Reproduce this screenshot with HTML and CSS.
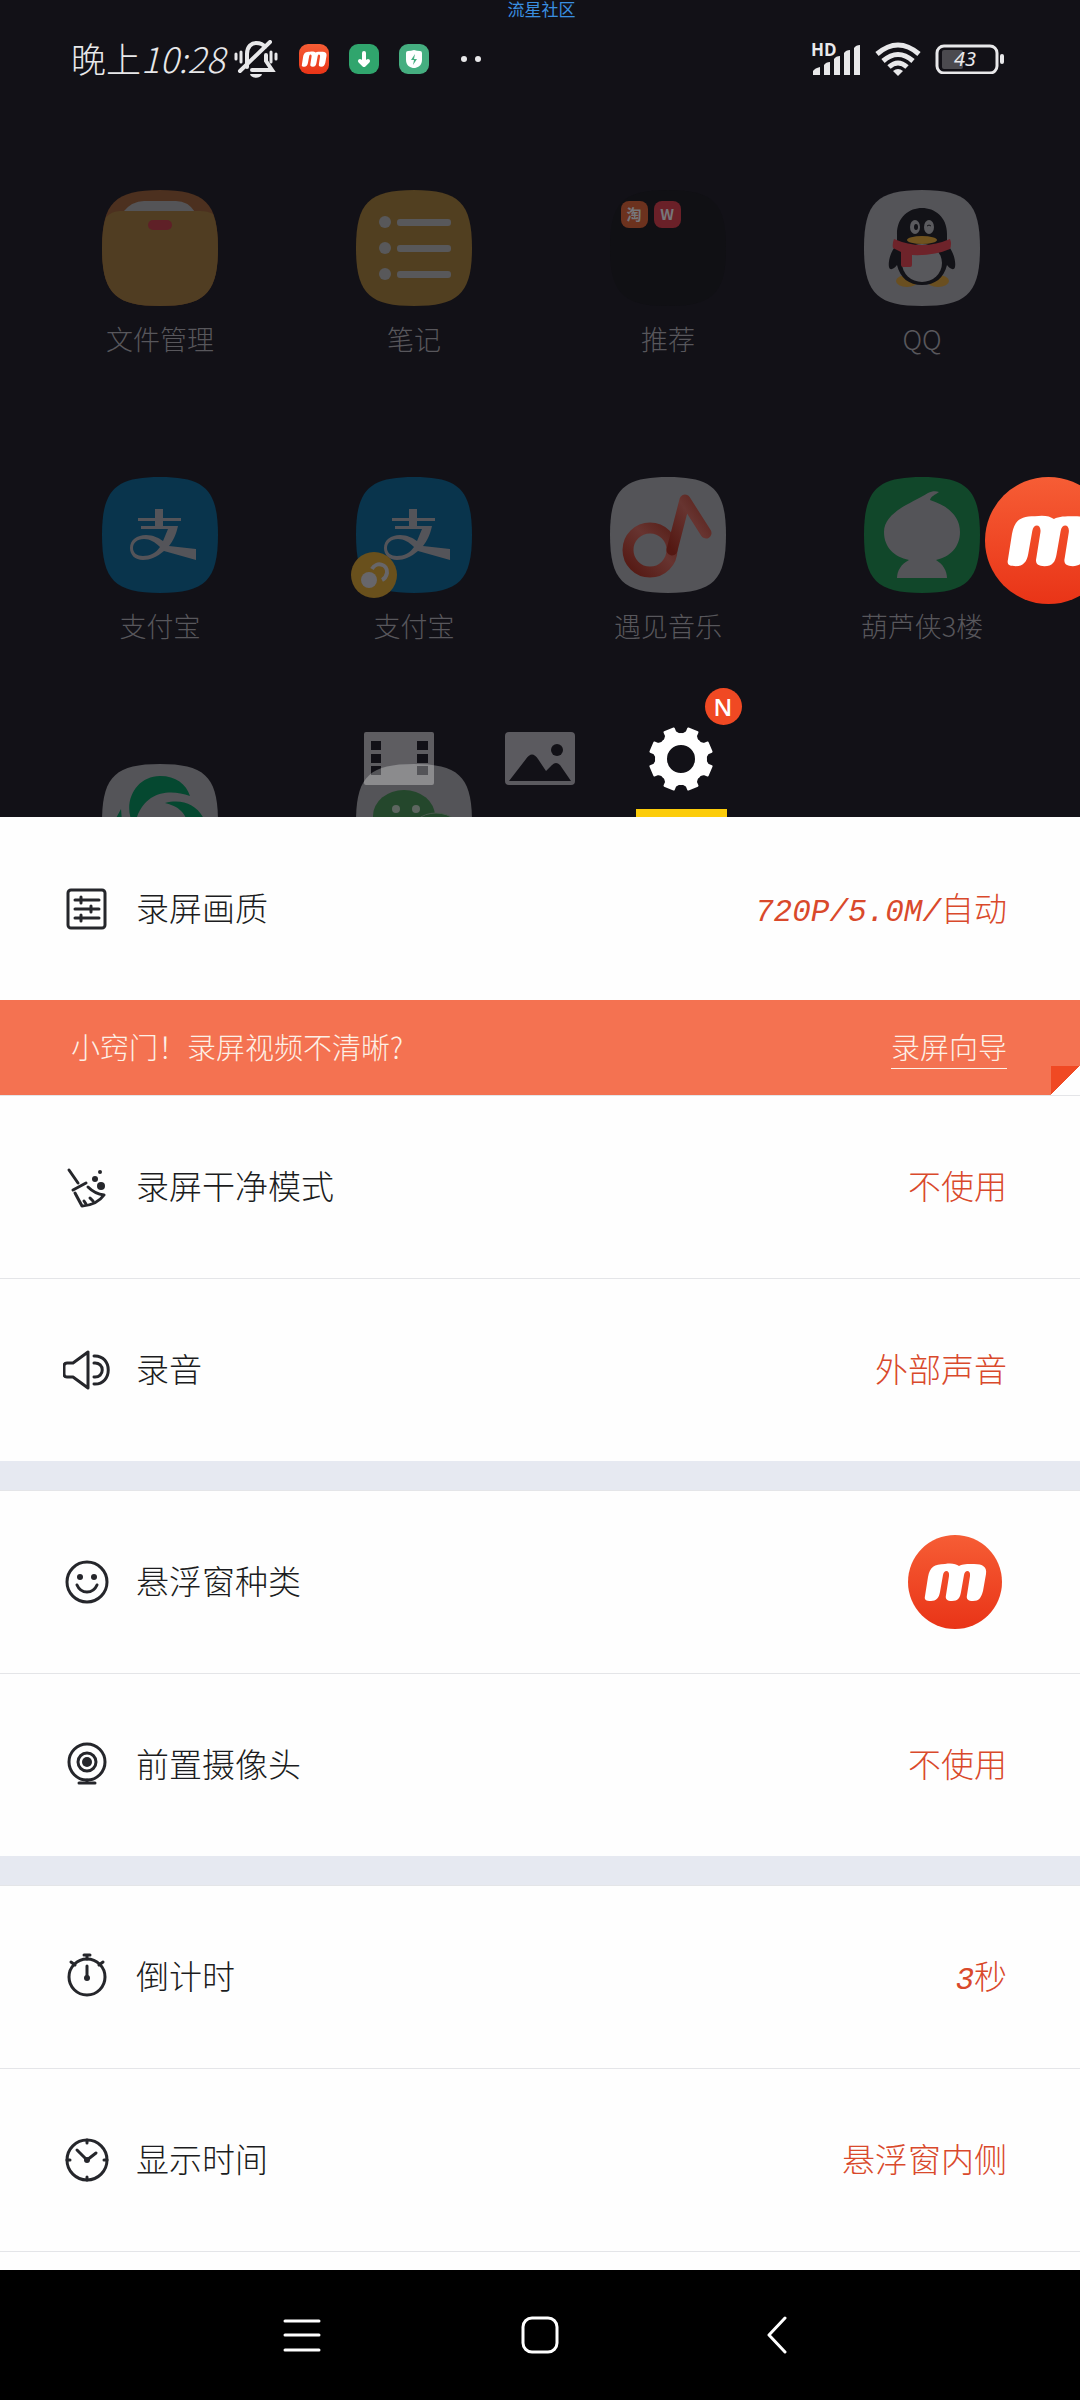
FILE: index.html
```html
<!DOCTYPE html>
<html lang="zh-CN">
<head>
    <meta charset="UTF-8">
    <meta name="viewport" content="width=device-width, initial-scale=1.0">
    <title>录屏设置</title>
    <link rel="stylesheet" href="styles.css">
</head>
<body>

    <!-- shared shapes -->
    <svg class="defs" width="0" height="0" aria-hidden="true">
        <defs>
            <linearGradient id="red" x1="0" y1="0" x2="0" y2="1">
                <stop offset="0" stop-color="#f65d35"/>
                <stop offset="1" stop-color="#e93417"/>
            </linearGradient>
            <linearGradient id="note" x1="0" y1="1" x2="1" y2="0">
                <stop offset="0" stop-color="#541812"/>
                <stop offset="0.6" stop-color="#673430"/>
                <stop offset="1" stop-color="#58201a"/>
            </linearGradient>
            <symbol id="squircle" viewBox="0 0 116 116">
                <path d="M58 0C103 0 116 13 116 58S103 116 58 116 0 103 0 58 13 0 58 0Z"/>
            </symbol>
            <symbol id="logo" viewBox="0 0 94 94">
                <path fill="#fff" d="M17 61L20 42C22 32 26 29 37 29C44 28 48 29 51 31C55 29 59 29 66 29C75 29 79 32 78 39L75 56C73 63 71 66 65 66C60 66 58 64 59 60L62 41C63 35 57 34 56 40L53 57C52 63 50 66 44 66C39 66 37 64 38 60L41 41C42 35 36 34 35 40L32 57C31 63 28 66 23 66C18 66 16 65 17 61Z"/>
            </symbol>
            <symbol id="alipay" viewBox="0 0 116 116">
                <path fill="#09344c" d="M58 0C103 0 116 13 116 58S103 116 58 116 0 103 0 58 13 0 58 0Z"/>
                <path fill="#545459" fill-rule="evenodd" d="M53 32H61V41H79V44H61V49H76C74 58 71 64 67 69L94 72V83L62 74C55 80 48 83 41 83C33 83 28 78 28 71C28 63 35 58 44 58C51 58 57 61 61 64L66 52H39V49H53V44H36V41H53ZM58 70C53 65 48 62 42 62C35 62 31 66 31 71C31 76 35 79 41 79C48 79 54 76 58 70Z"/>
            </symbol>
        </defs>
    </svg>

    <div class="home">
        <div class="watermark">流星社区</div>
        <div class="status">
            <div class="status-group">
                <div class="clock">
                    <span>晚上<i>10:28</i></span>
                    <svg width="46" height="38" viewBox="0 0 46 38" fill="none" stroke="#e8e8ea" stroke-width="4" stroke-linecap="round">
                        <path d="M14 27V14C14 6 19 3 23 3C27 3 30 4 32 7M33 15V21L39 30H19M37 2L7 31"/>
                        <path stroke-width="3" d="M3 14V19M8 12V22M38 12V22M43 14V19"/>
                        <path stroke="none" fill="#e8e8ea" d="M17 34H29C28 39 18 39 17 34Z"/>
                    </svg>
                </div>
                <svg width="30" height="30" viewBox="0 0 30 30">
                    <rect width="30" height="30" rx="9" fill="url(#red)"/>
                    <use href="#logo" x="-4" y="-4" width="38" height="38"/>
                </svg>
                <svg width="30" height="30" viewBox="0 0 30 30">
                    <rect width="30" height="30" rx="9" fill="#30a56d"/>
                    <path d="M15 9V20M11 17L15 21L19 17" fill="none" stroke="#fff" stroke-width="4" stroke-linecap="round" stroke-linejoin="round"/>
                </svg>
                <svg width="30" height="30" viewBox="0 0 30 30">
                    <rect width="30" height="30" rx="9" fill="#45ae80"/>
                    <path d="M7 9Q7 7 9 7Q12 7 15 6Q18 7 21 7Q23 7 23 9V16C23 22 18 24 15 24C12 24 7 22 7 16Z" fill="#fff"/>
                    <path d="M16 10L12 16H15L14 21L18 15H15Z" fill="#45ae80"/>
                </svg>
                <svg width="44" height="30" viewBox="0 0 44 30" fill="#e8e8ea">
                    <circle cx="15" cy="15" r="3"/>
                    <circle cx="29" cy="15" r="3"/>
                </svg>
            </div>
            <div class="status-group status-right">
                <svg width="50" height="34" viewBox="0 0 50 34" fill="#e8e8ea">
                    <text class="hd" x="0" y="14">HD</text>
                    <path d="M2 33V29Q4 26 9 25V33ZM13 33V23Q15 20 19 20V33ZM23 33V17Q25 14 29 14V33ZM33 33V11Q35 8 39 8V33ZM43 33V6Q45 3 49 3V33Z"/>
                </svg>
                <svg width="46" height="34" viewBox="0 0 46 34" fill="none" stroke="#e8e8ea" stroke-width="5">
                    <path d="M2 12Q23 -6 44 12M8 19Q23 6 38 19M14 25Q23 17 32 25"/>
                    <path fill="#e8e8ea" stroke="none" d="M18 29Q23 25 28 29L23 34Z"/>
                </svg>
                <svg width="69" height="30" viewBox="0 0 69 30">
                    <rect x="2" y="2" width="60" height="27" rx="7" fill="none" stroke="#e8e8ea" stroke-width="3"/>
                    <rect x="7" y="6" width="21" height="19" rx="2" fill="#4b4a4f"/>
                    <rect x="65" y="10" width="4" height="10" rx="2" fill="#e8e8ea"/>
                    <text class="percent" x="19" y="22">43</text>
                </svg>
            </div>
        </div>

        <div class="apps">
            <div class="app">
                <svg class="app-icon" viewBox="0 0 116 116">
                    <use href="#squircle" fill="#4c301f"/>
                    <path fill="#545457" d="M21 22Q30 11 42 11H74Q86 11 93 22Z"/>
                    <path fill="#503d22" d="M4 27Q10 21 18 21H98Q106 21 111 24Q116 36 116 58C116 103 103 116 58 116S0 103 0 58Q0 38 4 27Z"/>
                    <rect x="46" y="30" width="24" height="10" rx="5" fill="#5f2027"/>
                </svg>
                <span>文件管理</span>
            </div>
            <div class="app">
                <svg class="app-icon" viewBox="0 0 116 116">
                    <use href="#squircle" fill="#513f20"/>
                    <g fill="#58585a">
                        <circle cx="29" cy="32" r="6"/><rect x="41" y="29" width="54" height="7" rx="3"/>
                        <circle cx="29" cy="58" r="6"/><rect x="41" y="55" width="54" height="7" rx="3"/>
                        <circle cx="29" cy="84" r="6"/><rect x="41" y="81" width="54" height="7" rx="3"/>
                    </g>
                </svg>
                <span>笔记</span>
            </div>
            <div class="app">
                <svg class="app-icon" viewBox="0 0 116 116">
                    <use href="#squircle" fill="#101014"/>
                    <rect x="11" y="11" width="27" height="27" rx="8" fill="#6c321e"/>
                    <rect x="44" y="11" width="27" height="27" rx="8" fill="#6a2028"/>
                    <text class="mini" x="24" y="30">淘</text>
                    <text class="mini" x="57" y="30">W</text>
                </svg>
                <span>推荐</span>
            </div>
            <div class="app">
                <svg class="app-icon" viewBox="0 0 116 116">
                    <use href="#squircle" fill="#545458"/>
                    <ellipse cx="43" cy="91" rx="11" ry="6" fill="#6a4f20"/>
                    <ellipse cx="74" cy="91" rx="11" ry="6" fill="#6a4f20"/>
                    <path fill="#121217" d="M33 45C32 9 84 9 83 45V54C90 62 92 72 91 77C90 81 86 79 83 75C80 88 71 95 58 95S36 88 33 75C30 79 26 81 25 77C24 72 26 62 33 54Z"/>
                    <ellipse cx="58" cy="73" rx="20" ry="19" fill="#58585c"/>
                    <path fill="#6e232a" d="M30 49Q58 61 86 49Q88 54 86 59Q70 66 48 65V75Q48 77 46 77H39Q37 77 37 75V62L29 58Q28 54 30 49Z"/>
                    <ellipse cx="58" cy="50" rx="15" ry="4" fill="#70531f"/>
                    <ellipse cx="51" cy="37" rx="5" ry="7" fill="#5a5a5e"/>
                    <ellipse cx="65" cy="37" rx="5" ry="7" fill="#5a5a5e"/>
                    <ellipse cx="52" cy="37" rx="2" ry="3" fill="#121217"/>
                    <path d="M63 36Q65 34 67 36" fill="none" stroke="#121217" stroke-width="1"/>
                </svg>
                <span>QQ</span>
            </div>

            <div class="app">
                <svg class="app-icon" viewBox="0 0 116 116"><use href="#alipay"/></svg>
                <span>支付宝</span>
            </div>
            <div class="app">
                <svg class="app-icon" viewBox="0 0 116 116">
                    <use href="#alipay"/>
                    <circle cx="18" cy="98" r="23" fill="#69501c"/>
                    <circle cx="13" cy="103" r="8" fill="#67666a"/>
                    <path d="M16 92C20 84 32 87 31 96Q30 101 26 103" fill="none" stroke="#67666a" stroke-width="4"/>
                </svg>
                <span>支付宝</span>
            </div>
            <div class="app">
                <svg class="app-icon" viewBox="0 0 116 116">
                    <use href="#squircle" fill="#545458"/>
                    <g fill="none" stroke="url(#note)" stroke-linecap="round" stroke-linejoin="round">
                        <circle cx="40" cy="73" r="22" stroke-width="11"/>
                        <path d="M62 73L75 23L96 56" stroke-width="11"/>
                    </g>
                </svg>
                <span>遇见音乐</span>
            </div>
            <div class="app">
                <svg class="app-icon" viewBox="0 0 116 116">
                    <use href="#squircle" fill="#11472a"/>
                    <path fill="#545458" d="M20 55C20 35 48 26 64 16C68 14 72 14 75 15C71 18 67 19 66 23C82 28 96 38 96 55C96 70 86 80 72 83C79 87 83 94 83 101H33C33 94 37 87 45 83C30 80 20 70 20 55Z"/>
                </svg>
                <span>葫芦侠3楼</span>
            </div>

            <div class="app">
                <svg class="app-icon" viewBox="0 0 116 116">
                    <use href="#squircle" fill="#545458"/>
                    <path fill="#054830" d="M31 60C20 38 34 12 58 12C74 12 84 20 88 32C66 24 40 28 33 60ZM63 39C82 34 98 42 104 60H86C83 48 76 42 63 39ZM19 45L12 58H20Z"/>
                </svg>
            </div>
            <div class="app">
                <svg class="app-icon" viewBox="0 0 116 116">
                    <use href="#squircle" fill="#545458"/>
                    <ellipse cx="48" cy="52" rx="31" ry="26" fill="#24472c"/>
                    <circle cx="40" cy="45" r="4" fill="#5d6660"/>
                    <circle cx="60" cy="45" r="4" fill="#5d6660"/>
                    <ellipse cx="80" cy="72" rx="27" ry="23" fill="#24472c" stroke="#4a5a4e"/>
                </svg>
            </div>
        </div>

        <div class="tabs">
            <button class="tab" aria-label="视频">
                <svg width="70" height="54" viewBox="0 0 70 54" fill="#fff" fill-opacity="0.32">
                    <path fill-rule="evenodd" d="M2 0H68Q70 0 70 2V51Q70 53 68 53H2Q0 53 0 51V2Q0 0 2 0ZM7 9V18H17V9ZM7 22V31H17V22ZM7 34V43H17V34ZM53 9V18H64V9ZM53 22V31H64V22ZM53 34V43H64V34Z"/>
                </svg>
            </button>
            <button class="tab" aria-label="图片">
                <svg width="70" height="54" viewBox="0 0 70 54">
                    <rect width="70" height="53" rx="4" fill="#5b5a5f"/>
                    <path fill="#121117" d="M4 49L21 27Q27 18 33 27L41 39L47 33Q51 29 55 33L66 49Z"/>
                    <circle cx="52" cy="18" r="6" fill="#121117"/>
                </svg>
            </button>
            <button class="tab active" aria-label="设置">
                <svg width="64" height="64" viewBox="0 0 64 64" fill="#fff" stroke="#fff" stroke-width="2" stroke-linejoin="round">
                    <circle cx="32" cy="32" r="20" fill="none" stroke-width="12"/>
                    <g id="teeth">
                        <path id="tooth" d="M24 9L27 5V1H37V5L40 9Z" transform="rotate(22.5 32 32)"/>
                        <use href="#tooth" transform="rotate(90 32 32)"/>
                        <use href="#tooth" transform="rotate(180 32 32)"/>
                        <use href="#tooth" transform="rotate(270 32 32)"/>
                    </g>
                    <use href="#teeth" transform="rotate(45 32 32)"/>
                </svg>
                <span class="badge">N</span>
            </button>
        </div>

        <button class="float-btn" aria-label="悬浮窗">
            <svg width="127" height="127" viewBox="0 0 94 94">
                <circle cx="47" cy="47" r="47" fill="url(#red)"/>
                <use href="#logo" width="94" height="94"/>
            </svg>
        </button>
    </div>

    <main class="settings">
        <button class="row first">
            <svg class="row-icon" viewBox="0 0 48 48">
                <rect x="5" y="5" width="37" height="38" rx="3"/>
                <path d="M12 15H36M12 24H36M12 33H36M18 12V18M28 21V27M18 30V36"/>
            </svg>
            <span class="label">录屏画质</span>
            <span class="value"><i>720P/5.0M/</i>自动</span>
        </button>

        <div class="tip">
            <span>小窍门！录屏视频不清晰?</span>
            <a href="#">录屏向导</a>
        </div>

        <button class="row">
            <svg class="row-icon" viewBox="0 0 48 48">
                <path d="M6 7L15 20M10 27L23 20M12 30L19 43Q34 42 41 32M25 24Q32 31 41 32M23 41L21 38M30 38L27 35"/>
                <g class="solid"><circle cx="38" cy="23" r="4"/><circle cx="32" cy="16" r="3"/><circle cx="37" cy="9" r="2"/></g>
            </svg>
            <span class="label">录屏干净模式</span>
            <span class="value">不使用</span>
        </button>
        <button class="row">
            <svg class="row-icon" viewBox="0 0 48 48">
                <path d="M4 17H10L25 6V42L10 31H4Q1 31 1 28V20Q1 17 4 17ZM31 10C50 9 50 39 31 38M31 17C42 16 42 32 31 31"/>
            </svg>
            <span class="label">录音</span>
            <span class="value">外部声音</span>
        </button>

        <div class="divider"></div>

        <button class="row">
            <svg class="row-icon" viewBox="0 0 48 48">
                <circle cx="24" cy="24" r="20"/>
                <path d="M14 27Q17 34 24 34T34 27"/>
                <g class="solid"><circle cx="17" cy="19" r="3"/><circle cx="31" cy="19" r="3"/></g>
            </svg>
            <span class="label">悬浮窗种类</span>
            <svg class="kind" viewBox="0 0 94 94">
                <circle cx="47" cy="47" r="47" fill="url(#red)"/>
                <use href="#logo" width="94" height="94"/>
            </svg>
        </button>
        <button class="row">
            <svg class="row-icon" viewBox="0 0 48 48">
                <circle cx="24" cy="21" r="18"/>
                <circle cx="24" cy="21" r="9"/>
                <circle class="solid" cx="24" cy="21" r="5"/>
                <path d="M16 42H32M24 39V42"/>
            </svg>
            <span class="label">前置摄像头</span>
            <span class="value">不使用</span>
        </button>

        <div class="divider"></div>

        <button class="row">
            <svg class="row-icon" viewBox="0 0 48 48">
                <circle cx="24" cy="24" r="18"/>
                <path d="M21 2H27M24 2V6M8 9L12 12M40 9L36 12M24 13V24"/>
                <circle class="solid" cx="24" cy="25" r="3"/>
            </svg>
            <span class="label">倒计时</span>
            <span class="value"><i>3</i>秒</span>
        </button>
        <button class="row">
            <svg class="row-icon" viewBox="0 0 48 48">
                <circle cx="24" cy="24" r="20"/>
                <path d="M24 4V7M24 41V44M4 24H7M41 24H44M14 14L24 24L33 17"/>
                <circle class="solid" cx="24" cy="24" r="3"/>
            </svg>
            <span class="label">显示时间</span>
            <span class="value">悬浮窗内侧</span>
        </button>
        <div class="next"></div>
    </main>

    <nav class="navbar">
        <button aria-label="菜单"><svg width="38" height="38" viewBox="0 0 38 38"><path d="M2 5H36M2 19H36M2 34H36"/></svg></button>
        <button aria-label="主页"><svg width="38" height="38" viewBox="0 0 38 38"><rect x="2" y="2" width="34" height="34" rx="9"/></svg></button>
        <button aria-label="返回"><svg width="38" height="38" viewBox="0 0 38 38"><path d="M26 2L10 19L26 36"/></svg></button>
    </nav>

</body>
</html>
```

FILE: styles.css
```css
* {
    box-sizing: border-box;
}
body {
    margin: 0;
    height: 100vh;
    display: flex;
    flex-direction: column;
    overflow: hidden;
    background: #fefefe;
    font-family: "Noto Sans CJK SC", sans-serif;
    font-weight: 300;
}
button {
    border: none;
    background: none;
    padding: 0;
    font: inherit;
    cursor: pointer;
}
svg {
    display: block;
    flex: none;
}
.defs {
    position: absolute;
}

/* home screen behind the panel */
.home {
    position: relative;
    flex: 1;
    min-height: 0;
    overflow: hidden;
    background: #121117;
}
.watermark {
    height: 18px;
    padding-left: 3px;
    line-height: 18px;
    font-size: 17px;
    font-weight: 400;
    text-align: center;
    color: #3a8fe0;
}
.status {
    display: flex;
    justify-content: space-between;
    height: 82px;
    padding: 0 76px 0 71px;
    color: #e8e8ea;
    font-size: 35px;
    line-height: 48px;
}
.status-group, .clock {
    display: flex;
    align-items: center;
    gap: 20px;
}
.clock {
    gap: 8px;
}
.clock span {
    padding-bottom: 3px;
}
.status-right {
    gap: 14px;
}
.hd {
    font: bold 17px "Open Sans", sans-serif;
}
.percent {
    font: italic 20px "Noto Sans", sans-serif;
    fill: #e8e8ea;
}

.apps {
    display: grid;
    grid-template-columns: repeat(4, 1fr);
    row-gap: 121px;
    padding: 90px 31px 0 33px;
}
.app {
    display: flex;
    flex-direction: column;
    align-items: center;
    gap: 16px;
    font-size: 27px;
    line-height: 34px;
    color: #58575c;
}
.app-icon {
    width: 116px;
    height: 116px;
    overflow: visible;
}
.mini {
    font: bold 15px "Noto Sans CJK SC", sans-serif;
    text-anchor: middle;
    fill: #77767a;
}

.tabs {
    position: absolute;
    left: 0;
    right: 0;
    bottom: 0;
    display: flex;
    justify-content: center;
    gap: 50px;
}
.tab {
    position: relative;
    display: flex;
    align-items: center;
    justify-content: center;
    width: 91px;
    height: 117px;
    border-top: 8px solid transparent;
    border-bottom: 8px solid transparent;
}
.active {
    border-bottom-color: #fccc0a;
}
.badge {
    position: absolute;
    top: -20px;
    right: -15px;
    width: 37px;
    height: 37px;
    border-radius: 50%;
    background: #f04923;
    color: #fff;
    font: 600 24px/37px "Open Sans", sans-serif;
}
.float-btn {
    position: absolute;
    top: 477px;
    right: -32px;
}

/* settings panel */
.row {
    display: flex;
    align-items: center;
    width: 100%;
    height: 183px;
    padding: 0 73px 0 63px;
    border-top: 1px solid #e4e5e8;
    background: #fefefe;
    font-size: 33px;
    text-align: left;
}
.first {
    border-top-color: #fefefe;
}
.row-icon {
    width: 48px;
    height: 48px;
    fill: none;
    stroke: #25262b;
    stroke-width: 3;
    stroke-linecap: round;
    stroke-linejoin: round;
}
.row-icon .solid {
    fill: #25262b;
    stroke: none;
}
.label, .value {
    padding-bottom: 4px;
}
.label {
    flex: 1;
    margin-left: 25px;
    color: #1b1c20;
}
.value {
    color: #d9492b;
}
.value i {
    font-family: "Liberation Mono", monospace;
    font-size: 31px;
}
.kind {
    width: 94px;
    height: 94px;
    margin-right: 5px;
}

.tip {
    position: relative;
    display: flex;
    align-items: center;
    justify-content: space-between;
    height: 95px;
    padding: 0 73px 3px 71px;
    background: #f47251;
    color: #fdf0e6;
    font-size: 29px;
}
.tip a {
    color: inherit;
    text-decoration: none;
    line-height: 44px;
    border-bottom: 1px solid #fdf0e6;
}
/* folded corner */
.tip::after {
    content: "";
    position: absolute;
    right: 0;
    bottom: 0;
    width: 29px;
    height: 29px;
    background: linear-gradient(135deg, #f04923 50%, #fefefe 50%);
}
.divider {
    height: 29px;
    background: #e6e9f1;
}
.next {
    height: 19px;
    border-top: 1px solid #e4e5e8;
}

.navbar {
    display: flex;
    align-items: center;
    justify-content: center;
    gap: 200px;
    height: 130px;
    background: #000;
}
.navbar svg {
    fill: none;
    stroke: #fff;
    stroke-width: 3;
    stroke-linecap: round;
    stroke-linejoin: round;
}
```
